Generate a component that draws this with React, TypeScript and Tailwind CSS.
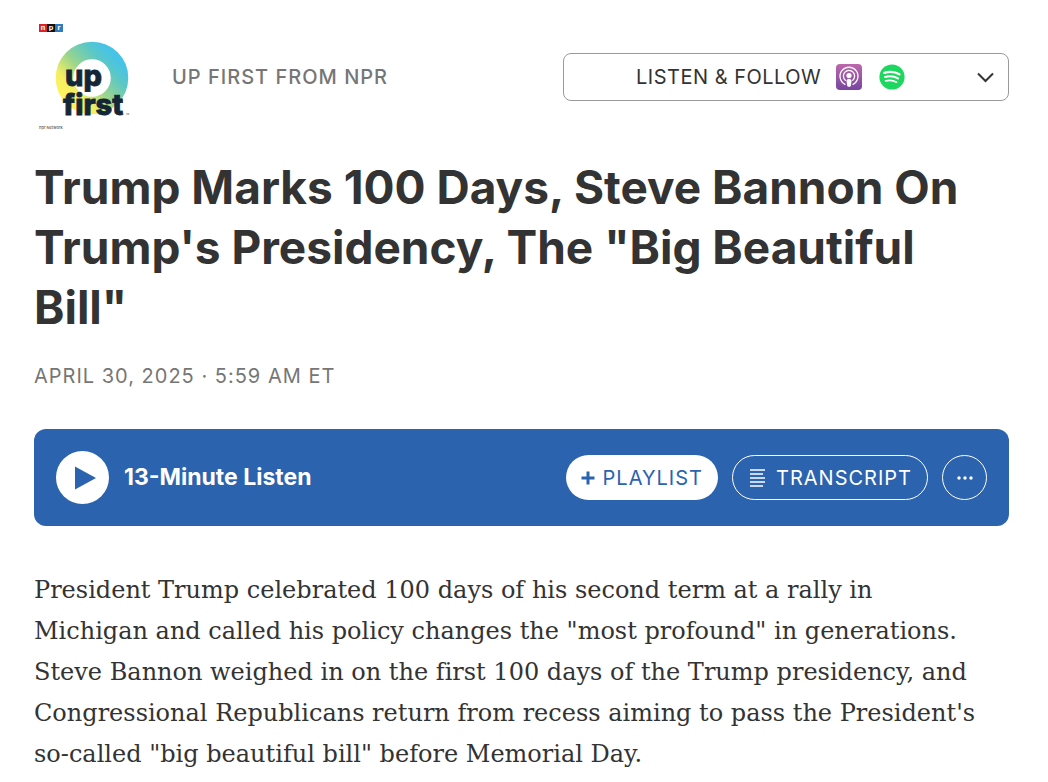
function ShowLogo() {
  return (
    <svg viewBox="0 0 110 110" className="size-[110px] shrink-0" role="img" aria-label="Up First from NPR">
      <defs>
        <linearGradient id="ring" gradientUnits="userSpaceOnUse" x1="34" y1="82" x2="82" y2="36">
          <stop offset="0" stopColor="#fff35c" />
          <stop offset="0.22" stopColor="#f3ef62" />
          <stop offset="0.5" stopColor="#9bd58c" />
          <stop offset="0.8" stopColor="#5cc8c4" />
          <stop offset="1" stopColor="#47c3e6" />
        </linearGradient>
      </defs>
      <circle cx="58" cy="56" r="27.5" fill="none" stroke="url(#ring)" strokeWidth="17.5" />
      <rect x="5" y="2" width="8" height="8" fill="#d8232a" />
      <rect x="13" y="2" width="8" height="8" fill="#111111" />
      <rect x="21" y="2" width="8" height="8" fill="#2f7bc1" />
      <g fill="#ffffff" fontFamily="Roboto, sans-serif" fontWeight="700" fontSize="8" textAnchor="middle">
        <text x="9" y="8">n</text>
        <text x="17" y="8">p</text>
        <text x="25" y="8">r</text>
      </g>
      <g fill="#152636" stroke="#152636" strokeWidth="0.8" fontFamily="Inter, sans-serif" fontWeight="800" fontSize="29">
        <text x="31" y="64">up</text>
        <text x="29" y="93">first</text>
      </g>
      <text x="92" y="93" fontSize="2" fill="#555555" fontFamily="Inter, sans-serif">TM</text>
      <text x="5" y="107" fontSize="4" fill="#555555" fontFamily="Inter, sans-serif">npr Network</text>
    </svg>
  );
}

function PodcastsIcon() {
  return (
    <svg viewBox="0 0 26 26" className="size-[26px]" aria-hidden="true">
      <defs>
        <linearGradient id="podcast" x1="0" y1="0" x2="0" y2="1">
          <stop offset="0" stopColor="#bd67ab" />
          <stop offset="1" stopColor="#7746a0" />
        </linearGradient>
      </defs>
      <rect width="26" height="26" rx="4" fill="url(#podcast)" />
      <g fill="none" stroke="#ffffff" strokeWidth="1.3" strokeLinecap="round">
        <path d="M9 20.3A9 9 0 1 1 17 20.3" />
        <path d="M9.3 16.2A5.6 5.6 0 1 1 16.7 16.2" />
      </g>
      <circle cx="13" cy="11.6" r="2.6" fill="#ffffff" />
      <path d="M10.4 16.5c0-2.1 5.2-2.1 5.2 0l-.7 5.2c-.2 1.4-3.5 1.4-3.7 0z" fill="#ffffff" />
    </svg>
  );
}

function SpotifyIcon() {
  return (
    <svg viewBox="0 0 26 26" className="size-[26px]" aria-hidden="true">
      <circle cx="13" cy="13" r="12.6" fill="#1ed760" />
      <g fill="none" stroke="#ffffff" strokeLinecap="round">
        <path d="M5.4 8.8c5-1.5 10.8-1 15 1.4" strokeWidth="2.4" />
        <path d="M6 13c4.5-1.3 9.2-.8 13 1.4" strokeWidth="2" />
        <path d="M6.6 16.9c3.8-1 7.7-.6 11 1.3" strokeWidth="1.7" />
      </g>
    </svg>
  );
}

export default function App() {
  return (
    <main className="bg-white pt-[22px] pr-[39px] pl-[34px] font-['Inter',sans-serif] text-[#333333]">
      <header className="flex items-center justify-between">
        <a href="#show" className="flex items-center gap-7 text-xl font-medium text-[#767676]">
          <ShowLogo />
          <span className="tracking-wider">UP FIRST FROM NPR</span>
        </a>
        <button
          type="button"
          className="flex h-12 w-[446px] items-center rounded-lg border border-[#999999] pr-3 pl-[72px] text-xl"
        >
          <span className="tracking-wide">LISTEN &amp; FOLLOW</span>
          <span className="ml-[15px] flex gap-[17px]">
            <PodcastsIcon />
            <SpotifyIcon />
          </span>
          <svg viewBox="0 0 20 20" className="ml-auto size-5" fill="none" stroke="#333333" strokeWidth="2" aria-hidden="true">
            <path d="m2 6.5 7.5 7.5L17 6.5" />
          </svg>
        </button>
      </header>

      <h1 className="mt-[25px] text-[46px] leading-[60px] font-bold">
        Trump Marks 100 Days, Steve Bannon On
        <br />
        Trump's Presidency, The "Big Beautiful
        <br />
        Bill"
      </h1>
      <p className="mt-6 text-xl leading-[30px] text-[#767676]">
        <time dateTime="2025-04-30T05:59" className="tracking-wider">APRIL 30, 2025 · 5:59 AM ET</time>
      </p>

      <section aria-label="Audio player" className="mt-[38px] flex h-[97px] items-center rounded-xl bg-[#2b63ae] px-[22px] text-white">
        <button type="button" className="flex items-center gap-[15px] text-[23px] font-bold">
          <svg viewBox="0 0 53 53" className="size-[53px]" aria-hidden="true">
            <circle cx="26.5" cy="26.5" r="26.5" fill="#ffffff" />
            <path d="M19 15.5v23l21-11.5z" fill="#2b63ae" />
          </svg>
          <span>13-Minute Listen</span>
        </button>
        <div className="ml-auto flex gap-[14px] text-xl">
          <button type="button" className="flex h-[45px] items-center gap-2 rounded-full bg-white px-[15px] text-[#2b63ae]">
            <svg viewBox="0 0 14 14" className="size-[14px]" stroke="#2b63ae" strokeWidth="3" aria-hidden="true">
              <path d="M7 0.5v13M0.5 7h13" />
            </svg>
            <span className="tracking-wider">PLAYLIST</span>
          </button>
          <button type="button" className="flex h-[45px] items-center gap-2.5 rounded-full border border-white px-[15px]">
            <svg viewBox="0 0 18 20" className="h-5 w-[18px]" stroke="#ffffff" strokeWidth="1.6" aria-hidden="true">
              <path d="M2 2h15M2 6h13M2 10h15M2 14h15M2 18h13" />
            </svg>
            <span className="tracking-wider">TRANSCRIPT</span>
          </button>
          <button type="button" aria-label="More options" className="flex size-[45px] items-center justify-center rounded-full border border-white">
            <svg viewBox="0 0 16 4" className="h-1 w-4" fill="#ffffff" aria-hidden="true">
              <circle cx="2" cy="2" r="1.7" />
              <circle cx="8" cy="2" r="1.7" />
              <circle cx="14" cy="2" r="1.7" />
            </svg>
          </button>
        </div>
      </section>

      <p className="mt-11 font-['DejaVu_Serif',serif] text-2xl leading-[41px] whitespace-nowrap [font-variant-ligatures:none]">
        President Trump celebrated 100 days of his second term at a rally in
        <br />
        Michigan and called his policy changes the "most profound" in generations.
        <br />
        Steve Bannon weighed in on the first 100 days of the Trump presidency, and
        <br />
        Congressional Republicans return from recess aiming to pass the President's
        <br />
        so-called "big beautiful bill" before Memorial Day.
      </p>
    </main>
  );
}
